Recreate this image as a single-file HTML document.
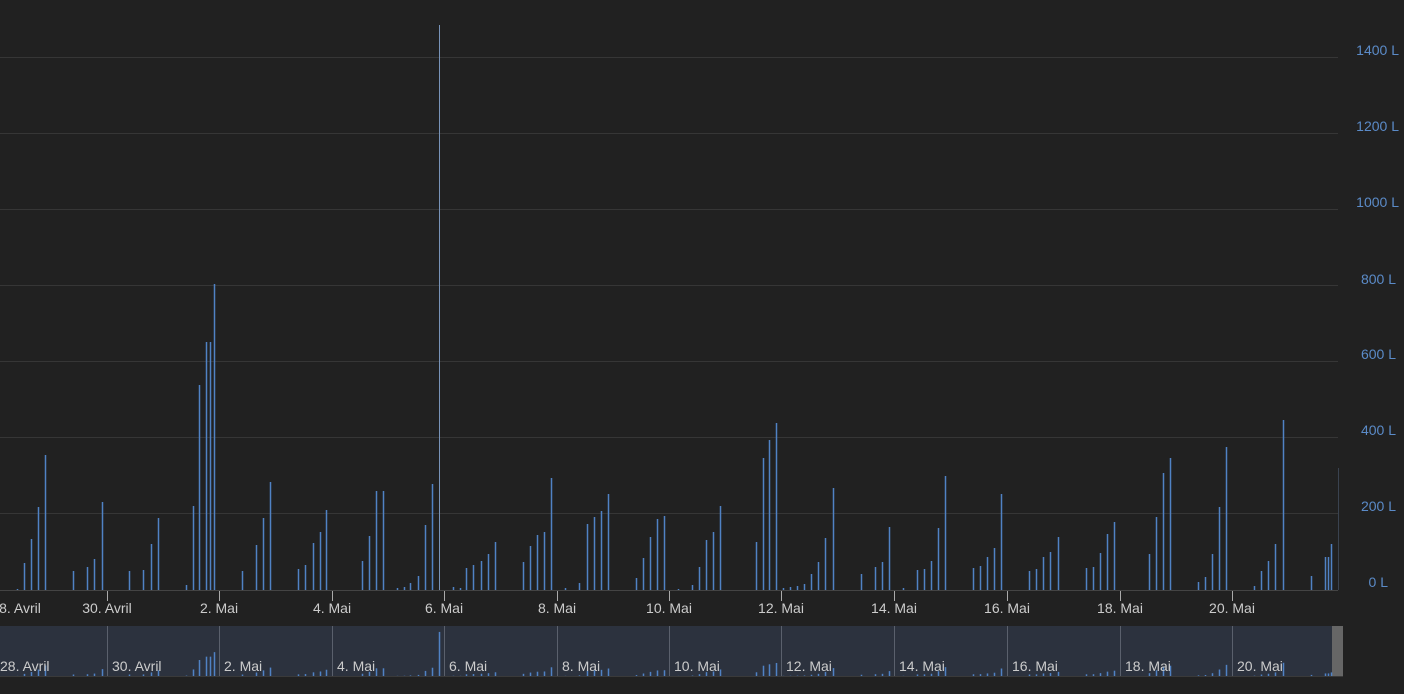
<!DOCTYPE html>
<html><head><meta charset="utf-8"><style>
html,body{margin:0;padding:0;background:#212121;width:1404px;height:694px;overflow:hidden}
svg{display:block}
text{font-family:"Liberation Sans",sans-serif;font-size:14px}
</style></head><body>
<svg id="s" width="1404" height="694" xmlns="http://www.w3.org/2000/svg">
<rect width="1404" height="694" fill="#212121"/>
<g stroke="#363636" stroke-width="1">
<line x1="0" y1="57.5" x2="1338" y2="57.5"/>
<line x1="0" y1="133.5" x2="1338" y2="133.5"/>
<line x1="0" y1="209.5" x2="1338" y2="209.5"/>
<line x1="0" y1="285.5" x2="1338" y2="285.5"/>
<line x1="0" y1="361.5" x2="1338" y2="361.5"/>
<line x1="0" y1="437.5" x2="1338" y2="437.5"/>
<line x1="0" y1="513.5" x2="1338" y2="513.5"/>
</g>
<line x1="1338.5" y1="468" x2="1338.5" y2="590" stroke="#3a4350"/>
<g fill="#5b8bc8" text-anchor="end">
<text x="1399" y="55">1400 L</text><text x="1399" y="131">1200 L</text><text x="1399" y="207">1000 L</text>
<text x="1396" y="284">800 L</text><text x="1396" y="359">600 L</text><text x="1396" y="435">400 L</text>
<text x="1396" y="511">200 L</text><text x="1388" y="587">0 L</text>
</g>
<rect x="0" y="626" width="1343" height="51" fill="#2c323e"/>
<rect x="1332" y="626" width="11" height="50" fill="#666"/>
<g id="bars" stroke="#5082c4" stroke-width="2"></g>
<g id="nbars" stroke="#5082c4" stroke-width="2"></g>
<line x1="0" y1="590.5" x2="1338" y2="590.5" stroke="#444"/>
<line x1="0" y1="676.5" x2="1343" y2="676.5" stroke="#3a3a3a"/>
<g id="ticks" stroke="#aaa" stroke-width="1"></g>
<g fill="#cccccc" text-anchor="middle">
<text x="20" y="613">8. Avril</text><text x="107" y="613">30. Avril</text><text x="219" y="613">2. Mai</text>
<text x="332" y="613">4. Mai</text><text x="444" y="613">6. Mai</text><text x="557" y="613">8. Mai</text>
<text x="669" y="613">10. Mai</text><text x="781" y="613">12. Mai</text><text x="894" y="613">14. Mai</text>
<text x="1007" y="613">16. Mai</text><text x="1120" y="613">18. Mai</text><text x="1232" y="613">20. Mai</text>
</g>
<g fill="#cccccc">
<text x="0" y="671">28. Avril</text><text x="112" y="671">30. Avril</text><text x="224" y="671">2. Mai</text>
<text x="337" y="671">4. Mai</text><text x="449" y="671">6. Mai</text><text x="562" y="671">8. Mai</text>
<text x="674" y="671">10. Mai</text><text x="786" y="671">12. Mai</text><text x="899" y="671">14. Mai</text>
<text x="1012" y="671">16. Mai</text><text x="1125" y="671">18. Mai</text><text x="1237" y="671">20. Mai</text>
</g>
</svg>
<script>
var d=[[17,589],[24,563],[31,539],[38,507],[45,455],[73,571],[87,567],[94,559],[102,502],[129,571],[143,570],[151,544],[158,518],[186,585],[193,506],[199,385],[206,342],[210,342],[214,284],[242,571],[256,545],[263,518],[270,482],[298,569],[305,565],[313,543],[320,532],[326,510],[362,561],[369,536],[376,491],[383,491],[397,588],[404,587],[410,583],[418,576],[425,525],[432,484],[439,25],[453,587],[460,588],[466,568],[473,565],[481,561],[488,554],[495,542],[523,562],[530,546],[537,535],[544,532],[551,478],[565,588],[579,583],[587,524],[594,517],[601,511],[608,494],[636,578],[643,558],[650,537],[657,519],[664,516],[678,589],[692,585],[699,567],[706,540],[713,532],[720,506],[756,542],[763,458],[769,440],[776,423],[783,588],[790,587],[797,586],[804,584],[811,574],[818,562],[825,538],[833,488],[861,574],[875,567],[882,562],[889,527],[903,588],[917,570],[924,569],[931,561],[938,528],[945,476],[973,568],[980,566],[987,557],[994,548],[1001,494],[1029,571],[1036,569],[1043,557],[1050,552],[1058,537],[1086,568],[1093,567],[1100,553],[1107,534],[1114,522],[1149,554],[1156,517],[1163,473],[1170,458],[1198,582],[1205,577],[1212,554],[1219,507],[1226,447],[1254,586],[1261,571],[1268,561],[1275,544],[1283,420],[1311,576],[1325,557],[1328,557],[1331,544]];
var ns="http://www.w3.org/2000/svg",b=document.getElementById('bars'),nb=document.getElementById('nbars'),t=document.getElementById('ticks');
d.forEach(function(p){var l=document.createElementNS(ns,'line');var x=p[0]+0.5;l.setAttribute('x1',x);l.setAttribute('x2',x);l.setAttribute('y1',p[1]);l.setAttribute('y2',590);l.setAttribute('stroke-width',p[0]==439?1:1.5);if(p[0]==439)l.setAttribute('stroke','#7893b8');b.appendChild(l);
var h=(590-p[1])*0.078;var m=document.createElementNS(ns,'line');m.setAttribute('x1',x);m.setAttribute('x2',x);m.setAttribute('y1',676-h);m.setAttribute('y2',676);m.setAttribute('stroke-width',1.5);nb.appendChild(m);});
[107,219,332,444,557,669,781,894,1007,1120,1232].forEach(function(x){var l=document.createElementNS(ns,'line');l.setAttribute('x1',x+.5);l.setAttribute('x2',x+.5);l.setAttribute('y1',591);l.setAttribute('y2',601);t.appendChild(l);
var v=document.createElementNS(ns,'line');v.setAttribute('x1',x+.5);v.setAttribute('x2',x+.5);v.setAttribute('y1',626);v.setAttribute('y2',676);v.setAttribute('stroke','#5a606c');t.appendChild(v);});
</script>
</body></html>
